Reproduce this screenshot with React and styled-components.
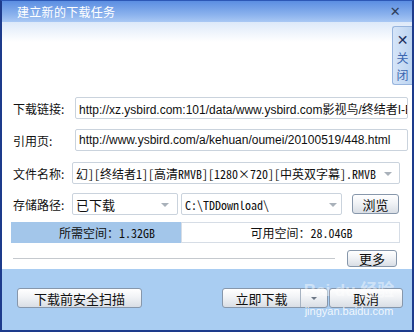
import styled, { createGlobalStyle } from 'styled-components'

const GlobalStyle = createGlobalStyle`
  html, body { margin: 0; padding: 0; background: #fff; }
  body {
    width: 414px; height: 332px; overflow: hidden;
    font-family: "Noto Sans CJK SC", sans-serif;
  }
`;

const mono = `"Noto Sans Mono CJK SC", "Liberation Mono", "Noto Sans CJK SC", monospace`;

const Window = styled.div`
  width: 414px;
  height: 332px;
  box-sizing: border-box;
  display: flex;
  flex-direction: column;
  border: 2px solid #1d3b8c;
  border-top: 1px solid #2d58b6;
  background: #a9cdf2;
  position: relative;
`;

const TitleBar = styled.div`
  height: 21px;
  flex: none;
  display: flex;
  align-items: center;
  justify-content: space-between;
  padding: 0 11px 0 15px;
  background: linear-gradient(#5b8ee2, #8fb5ee 70%, #a9c8f4);
  color: #fff;
  font-size: 12px;
  letter-spacing: 0.3px;
`;

const TitleClose = styled.span`
  color: #2d3e5c;
  font-family: "DejaVu Sans", sans-serif;
  font-size: 13px;
  line-height: 1;
`;

const Body = styled.div`
  height: 247px;
  flex: none;
  box-sizing: border-box;
  padding-top: 75px;
  background: linear-gradient(#dde9f9 0, #ffffff 20px);
  position: relative;
  display: flex;
  flex-direction: column;
`;

const CloseTab = styled.div`
  position: absolute;
  top: 4px;
  right: 0;
  width: 20px;
  height: 59px;
  box-sizing: border-box;
  border: 1px solid #98b5de;
  border-right: none;
  border-radius: 3px 0 0 3px;
  background: linear-gradient(90deg, #d6e5f8, #bcd4f1);
  display: flex;
  flex-direction: column;
  align-items: center;
  padding-top: 4px;
  color: #3a66b0;
  font-size: 12px;
  line-height: 17px;
`;

const TabX = styled.span`
  color: #1b2f5c;
  font-family: "DejaVu Sans", sans-serif;
  font-weight: bold;
  font-size: 14px;
  line-height: 18px;
`;

const Row = styled.div`
  display: flex;
  align-items: center;
  height: 22px;
  margin-top: ${p => p.$mt || 0}px;
  padding-left: 11px;
`;

const Label = styled.div`
  width: 59px;
  flex: none;
  font-size: 12px;
  color: #111;
`;

const TextBox = styled.div`
  box-sizing: border-box;
  width: ${p => p.$w}px;
  height: 22px;
  margin-left: ${p => p.$ml || 0}px;
  border: 1px solid #cad3dd;
  border-radius: 2px;
  background: #fff;
  padding-left: 3px;
  display: flex;
  align-items: center;
  overflow: hidden;
  white-space: nowrap;
  font-family: "Liberation Sans", "Noto Sans CJK SC", sans-serif;
  font-size: 12px;
  color: #111;
`;

const Combo = styled(TextBox)`
  position: relative;
  font-family: ${mono};
  padding-right: 20px;
  &::after {
    content: "";
    position: absolute;
    right: ${p => p.$arrow || 8}px;
    top: 9px;
    border-left: 4px solid transparent;
    border-right: 4px solid transparent;
    border-top: 4px solid #a9b1ba;
  }
`;

const ComboText = styled.span`
  font-size: ${p => p.$fs || 12}px;
  font-family: ${p => (p.$cjk ? '"Noto Sans CJK SC", sans-serif' : 'inherit')};
`;

const Button = styled.button`
  box-sizing: border-box;
  width: ${p => p.$w}px;
  height: ${p => p.$h || 20}px;
  margin-left: ${p => p.$ml || 0}px;
  padding: 0;
  border: 1px solid #8797ab;
  border-radius: 3px;
  background: linear-gradient(#ffffff, #f1f3f6 45%, #d9dee5);
  font-family: "Noto Sans CJK SC", sans-serif;
  font-size: 13px;
  color: #111;
  line-height: 1;
  display: flex;
  align-items: center;
  justify-content: center;
`;

const SpaceBar = styled.div`
  display: flex;
  width: 389px;
  height: 21px;
  margin: 7px 0 0 9px;
  font-size: 12px;
  color: #111;
`;

const SpacePart = styled.div`
  box-sizing: border-box;
  width: ${p => (p.$w ? `${p.$w}px` : 'auto')};
  flex: ${p => (p.$w ? 'none' : 1)};
  background: ${p => (p.$filled ? '#a3c6ea' : '#fff')};
  border: 1px solid ${p => (p.$filled ? '#a3c6ea' : '#d6dde6')};
  display: flex;
  align-items: center;
  justify-content: center;
  padding-left: ${p => p.$pl || 0}px;
`;

const SizeValue = styled.span`
  font-family: ${mono};
  font-size: 12px;
`;

const MoreRow = styled.div`
  display: flex;
  align-items: center;
  height: 17px;
  margin-top: 7px;
  padding-left: 11px;
`;

const Separator = styled.div`
  width: 322px;
  height: 1px;
  background: #c5c9ce;
`;

const Footer = styled.div`
  flex: 1;
  display: flex;
  align-items: flex-start;
  padding-top: 19px;
  position: relative;
`;

const Split = styled.div`
  display: flex;
  margin-left: 80px;
  box-sizing: border-box;
  height: 20px;
  border: 1px solid #8797ab;
  border-radius: 3px;
  background: linear-gradient(#ffffff, #f1f3f6 45%, #d9dee5);
  overflow: hidden;
`;

const SplitMain = styled.div`
  width: 77px;
  display: flex;
  align-items: center;
  justify-content: center;
  font-size: 13px;
  color: #111;
  border-right: 1px solid #a7b3c2;
`;

const SplitArrow = styled.div`
  width: 26px;
  display: flex;
  align-items: center;
  justify-content: center;
  &::after {
    content: "";
    border-left: 3px solid transparent;
    border-right: 3px solid transparent;
    border-top: 3px solid #6d7785;
  }
`;

const Watermark = styled.div`
  position: absolute;
  left: 288px;
  top: 12px;
  width: 118px;
  display: flex;
  flex-direction: column;
  align-items: center;
  white-space: nowrap;
  pointer-events: none;
`;

const MarkLogo = styled.div`
  font-family: "Liberation Sans", "Noto Sans CJK SC", sans-serif;
  font-weight: bold;
  font-size: 17px;
  line-height: 20px;
  color: rgba(255, 255, 255, 0.45);
`;

const MarkUrl = styled.div`
  margin-top: 4px;
  font-family: "Liberation Sans", sans-serif;
  font-size: 11px;
  line-height: 13px;
  color: rgba(255, 255, 255, 0.85);
`;

export default function App() {
  return (
    <>
      <GlobalStyle />
      <Window>
        <TitleBar>
          <span>建立新的下载任务</span>
          <TitleClose>✕</TitleClose>
        </TitleBar>
        <Body>
          <CloseTab>
            <TabX>✕</TabX>
            <span>关</span>
            <span>闭</span>
          </CloseTab>

          <Row>
            <Label>下载链接:</Label>
            <TextBox $w={333} $ml={3}>
              http://xz.ysbird.com:101/data/www.ysbird.com影视鸟/终结者I-E
            </TextBox>
          </Row>
          <Row $mt={10}>
            <Label>引用页:</Label>
            <TextBox $w={333} $ml={3}>
              http://www.ysbird.com/a/kehuan/oumei/20100519/448.html
            </TextBox>
          </Row>
          <Row $mt={11}>
            <Label>文件名称:</Label>
            <Combo $w={328} $arrow={7}>
              幻][终结者1][高清RMVB][1280×720][中英双字幕].RMVB
            </Combo>
          </Row>
          <Row $mt={9}>
            <Label>存储路径:</Label>
            <Combo $w={106} $arrow={8}>
              <ComboText $cjk $fs={13}>已下载</ComboText>
            </Combo>
            <Combo $w={161} $ml={3} $arrow={4}>
              C:\TDDownload\
            </Combo>
            <Button $w={47} $ml={10}>浏览</Button>
          </Row>

          <SpaceBar>
            <SpacePart $w={170} $filled $pl={22}>
              所需空间：<SizeValue>1.32GB</SizeValue>
            </SpacePart>
            <SpacePart $pl={22}>
              可用空间：<SizeValue>28.04GB</SizeValue>
            </SpacePart>
          </SpaceBar>

          <MoreRow>
            <Separator />
            <Button $w={50} $h={17} $ml={12}>更多</Button>
          </MoreRow>
        </Body>

        <Footer>
          <Button $w={125} $ml={15}>下载前安全扫描</Button>
          <Split>
            <SplitMain>立即下载</SplitMain>
            <SplitArrow />
          </Split>
          <Button $w={74} $ml={1}>取消</Button>
          <Watermark>
            <MarkLogo>Bai du 经验</MarkLogo>
            <MarkUrl>jingyan.baidu.com</MarkUrl>
          </Watermark>
        </Footer>
      </Window>
    </>
  )
}
